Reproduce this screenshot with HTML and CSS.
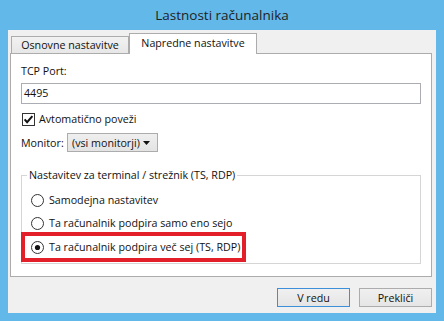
FILE: index.html
```html
<!DOCTYPE html>
<html lang="sl">
<head>
<meta charset="utf-8">
<title>Lastnosti računalnika</title>
<link rel="stylesheet" href="styles.css">
</head>
<body>
<div class="window">
  <div class="titlebar">Lastnosti računalnika</div>
  <div class="client">
    <div class="tabs">
      <div class="tab">Osnovne nastavitve</div>
      <div class="tab active">Napredne nastavitve</div>
    </div>
    <div class="panel">
      <div class="field-label">TCP Port:</div>
      <div class="textbox">4495</div>
      <div class="check">
        <svg class="checkbox" width="13" height="13" viewBox="0 0 13 13"><rect x="0.5" y="0.5" width="12" height="12" fill="#fff" stroke="#333"/><path d="M2.6 6.4 L5.1 9.2 L10.4 3.2" fill="none" stroke="#111" stroke-width="2"/></svg>
        <span>Avtomatično poveži</span>
      </div>
      <div class="monitor">
        <span class="monitor-label">Monitor:</span>
        <div class="combo"><span>(vsi monitorji)</span><svg width="7" height="4" viewBox="0 0 7 4"><polygon points="0,0 7,0 3.5,4" fill="#111"/></svg></div>
      </div>
      <fieldset class="group">
        <legend>Nastavitev za terminal / strežnik (TS, RDP)</legend>
        <div class="radio r1">
          <svg width="13" height="13" viewBox="0 0 13 13"><circle cx="6.5" cy="6.5" r="6" fill="#fff" stroke="#333"/></svg>
          <span>Samodejna nastavitev</span>
        </div>
        <div class="radio r2">
          <svg width="13" height="13" viewBox="0 0 13 13"><circle cx="6.5" cy="6.5" r="6" fill="#fff" stroke="#333"/></svg>
          <span>Ta računalnik podpira samo eno sejo</span>
        </div>
        <div class="highlight">
          <div class="radio">
            <svg width="13" height="13" viewBox="0 0 13 13"><circle cx="6.5" cy="6.5" r="6" fill="#fff" stroke="#333"/><circle cx="6.5" cy="6.5" r="2.6" fill="#111"/></svg>
            <span>Ta računalnik podpira več sej (TS, RDP)</span>
          </div>
        </div>
      </fieldset>
    </div>
    <div class="buttons">
      <button class="btn default">V redu</button>
      <button class="btn">Prekliči</button>
    </div>
  </div>
</div>
</body>
</html>
```
FILE: styles.css
```css
html, body {
  margin: 0;
  padding: 0;
}
body {
  width: 444px;
  height: 321px;
  overflow: hidden;
  font-family: "Open Sans", "Noto Sans", sans-serif;
  font-size: 10.7px;
  color: #111;
}
.window {
  width: 444px;
  height: 321px;
  box-sizing: border-box;
  background: #63b8ea;
  padding: 0 8px 8px;
  display: flex;
  flex-direction: column;
}
.titlebar {
  height: 30px;
  line-height: 30px;
  text-align: center;
  font-size: 13.5px;
  color: #222;
}
.client {
  flex: 1;
  background: #f0f0f0;
  padding: 3px 4px 6px 2px;
  display: flex;
  flex-direction: column;
}
.tabs {
  display: flex;
  align-items: flex-end;
  height: 20px;
  padding-left: 1px;
}
.tab {
  box-sizing: border-box;
  height: 17px;
  width: 118px;
  border: 1px solid #acacac;
  border-bottom: 0;
  background: linear-gradient(#f2f2f2, #e7e7e7);
  text-align: center;
  line-height: 16px;
  white-space: nowrap;
}
.tab.active {
  height: 21px;
  width: 128px;
  margin-bottom: -1px;
  background: #fff;
  position: relative;
  z-index: 1;
  line-height: 19px;
}
.panel {
  box-sizing: border-box;
  height: 224px;
  background: #fff;
  border: 1px solid #acacac;
  padding: 0 10px;
}
.field-label {
  margin-top: 10px;
  line-height: 14px;
}
.textbox {
  margin-top: 5px;
  height: 21px;
  box-sizing: border-box;
  border: 1px solid #abadb3;
  padding-left: 2px;
  line-height: 19px;
}
.check {
  margin-top: 8px;
  display: flex;
  align-items: center;
  height: 14px;
  gap: 4px;
  padding-left: 1px;
}
.checkbox, .radio svg {
  flex: none;
}
.monitor {
  margin-top: 7px;
  display: flex;
  align-items: center;
  height: 19px;
}
.monitor-label {
  width: 46px;
}
.combo {
  box-sizing: border-box;
  width: 91px;
  height: 19px;
  border: 1px solid #acacac;
  background: linear-gradient(#efefef, #e3e3e3);
  display: flex;
  align-items: center;
  justify-content: space-between;
  padding: 0 7px 0 4px;
}
.group {
  margin: 16px 0 0;
  padding: 0 0 1px;
  border: 1px solid #d5d5d5;
  min-width: 0;
}
.group legend {
  margin-left: 5px;
  padding: 0 2px;
  line-height: 14px;
}
.radio {
  display: flex;
  align-items: center;
  height: 14px;
  gap: 5px;
  white-space: nowrap;
}
.r1, .r2 {
  padding-left: 9px;
}
.r1 {
  margin-top: 11px;
}
.r2 {
  margin-top: 9px;
}
.highlight {
  margin-top: 2px;
  margin-left: -1px;
  border: 4px solid #e3202a;
  padding: 4px 2px 4px 6px;
  width: fit-content;
}
.buttons {
  margin-top: 11px;
  display: flex;
  justify-content: flex-end;
  gap: 9px;
}
.btn {
  width: 73px;
  height: 19px;
  box-sizing: border-box;
  border: 1px solid #acacac;
  background: linear-gradient(#f0f0f0, #e5e5e5);
  font: inherit;
  color: #111;
  padding: 0;
  margin: 0;
}
.btn.default {
  border-color: #3c8fd8;
}
```
